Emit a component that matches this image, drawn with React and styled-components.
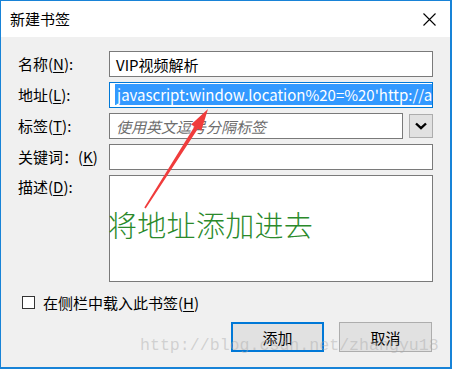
import React from "react";
import styled, { createGlobalStyle } from "styled-components";

const GlobalStyle = createGlobalStyle`
  html, body {
    margin: 0;
    padding: 0;
    background: #ffffff;
  }
  * {
    box-sizing: border-box;
  }
`;

const UI_FONT = `"Noto Sans CJK SC", "Noto Sans", sans-serif`;

const Window = styled.div`
  position: relative;
  width: 452px;
  height: 369px;
  display: flex;
  flex-direction: column;
  border: 1px solid #1883d7;
  border-width: 1px 2px 2px 1px;
  background: #f0f0f0;
  font-family: ${UI_FONT};
  font-size: 15px;
  color: #000;
  overflow: hidden;
`;

const TitleBar = styled.div`
  height: 36px;
  flex: none;
  display: flex;
  align-items: center;
  justify-content: space-between;
  padding: 0 14px 0 9px;
  background: #ffffff;
`;

const Title = styled.span`
  font-size: 15px;
  line-height: 20px;
`;

const CloseIcon = styled.svg`
  width: 13px;
  height: 13px;
  display: block;
`;

const Body = styled.div`
  flex: 1;
  display: flex;
  flex-direction: column;
  padding: 14px 17px 0 17px;
`;

const Form = styled.div`
  display: grid;
  grid-template-columns: 91px 1fr;
  row-gap: 5px;
  align-items: center;
`;

const Label = styled.label`
  line-height: 20px;
  white-space: nowrap;
  align-self: ${(p) => (p.$top ? "start" : "center")};
  padding-top: ${(p) => (p.$top ? "2px" : "0")};
  u {
    text-decoration: underline;
    text-underline-offset: 2px;
  }
`;

const Field = styled.div`
  height: ${(p) => p.$height || 26}px;
  border: 1px solid ${(p) => (p.$focused ? "#0078d7" : "#7a7a7a")};
  background: #ffffff;
  padding: ${(p) => (p.$focused ? "1px 0 2px 5px" : "0 6px")};
  display: flex;
  align-items: ${(p) => (p.$focused ? "stretch" : "center")};
  overflow: hidden;
  white-space: nowrap;
  flex: 1;
  min-width: 0;
`;

const Selected = styled.span`
  display: inline-flex;
  align-items: center;
  background: #3399ff;
  color: #ffffff;
  padding-left: 2px;
  flex: 1;
  overflow: hidden;
`;

const Placeholder = styled.span`
  color: #6d6d6d;
  font-style: italic;
`;

const TagRow = styled.div`
  display: flex;
  align-items: center;
  gap: 6px;
`;

const DropButton = styled.div`
  width: 24px;
  height: 24px;
  flex: none;
  display: flex;
  align-items: center;
  justify-content: center;
  background: #e1e1e1;
  border: 1px solid #adadad;
`;

const Description = styled(Field)`
  display: block;
  padding: 33px 0 0 0;
  overflow: visible;
`;

const Annotation = styled.div`
  margin-left: -2px;
  font-size: 29px;
  line-height: 30px;
  color: #2b8a2b;
  font-weight: 300;
  letter-spacing: 0.3px;
`;

const CheckRow = styled.div`
  margin-top: 10px;
  height: 20px;
  display: flex;
  align-items: center;
  gap: 8px;
  padding-left: 4px;
  u {
    text-underline-offset: 2px;
  }
`;

const CheckBox = styled.span`
  width: 13px;
  height: 13px;
  border: 1px solid #333333;
  background: #ffffff;
  flex: none;
`;

const Buttons = styled.div`
  margin-top: 10px;
  display: flex;
  justify-content: flex-end;
  gap: 15px;
  padding-right: 1px;
`;

const Button = styled.div`
  width: 93px;
  height: 30px;
  display: flex;
  align-items: center;
  justify-content: center;
  background: #e1e1e1;
  border: ${(p) => (p.$primary ? "2px solid #0078d7" : "1px solid #adadad")};
`;

const Overlay = styled.svg`
  position: absolute;
  left: -1px;
  top: -1px;
  width: 452px;
  height: 369px;
  pointer-events: none;
`;

const Watermark = styled.div`
  position: absolute;
  left: 139px;
  top: 335px;
  font-family: "Liberation Mono", "DejaVu Sans Mono", monospace;
  font-size: 16.6px;
  line-height: 20px;
  color: rgba(170, 170, 170, 0.45);
  pointer-events: none;
  white-space: nowrap;
`;

export default function App() {
  return (
    <>
      <GlobalStyle />
      <Window>
        <TitleBar>
          <Title>新建书签</Title>
          <CloseIcon viewBox="0 0 13 13">
            <path d="M0.5 0.5 L12.5 12.5 M12.5 0.5 L0.5 12.5" stroke="#000" strokeWidth="1.1" fill="none" />
          </CloseIcon>
        </TitleBar>
        <Body>
          <Form>
            <Label>名称(<u>N</u>):</Label>
            <Field>VIP视频解析</Field>

            <Label>地址(<u>L</u>):</Label>
            <Field $focused>
              <Selected>javascript:window.location%20=%20'http://api.example</Selected>
            </Field>

            <Label>标签(<u>T</u>):</Label>
            <TagRow>
              <Field>
                <Placeholder>使用英文逗号分隔标签</Placeholder>
              </Field>
              <DropButton>
                <svg width="12" height="8" viewBox="0 0 12 8">
                  <path d="M1 1.5 L6 6.2 L11 1.5" stroke="#000" strokeWidth="2.4" fill="none" />
                </svg>
              </DropButton>
            </TagRow>

            <Label>关键词：(<u>K</u>)</Label>
            <Field />

            <Label $top>描述(<u>D</u>):</Label>
            <Description $height={107}>
              <Annotation>将地址添加进去</Annotation>
            </Description>
          </Form>

          <CheckRow>
            <CheckBox />
            <span>在侧栏中载入此书签(<u>H</u>)</span>
          </CheckRow>

          <Buttons>
            <Button $primary>添加</Button>
            <Button>取消</Button>
          </Buttons>
        </Body>

        <Overlay viewBox="0 0 452 369">
          <polygon
            points="144.3,207.6 194.5,126.5 191.1,124.4 208,109 201.3,130.8 197.9,128.7 145.7,208.4"
            fill="#f03c3c"
          />
        </Overlay>
        <Watermark>http://blog.csdn.net/zhangyu18</Watermark>
      </Window>
    </>
  );
}
